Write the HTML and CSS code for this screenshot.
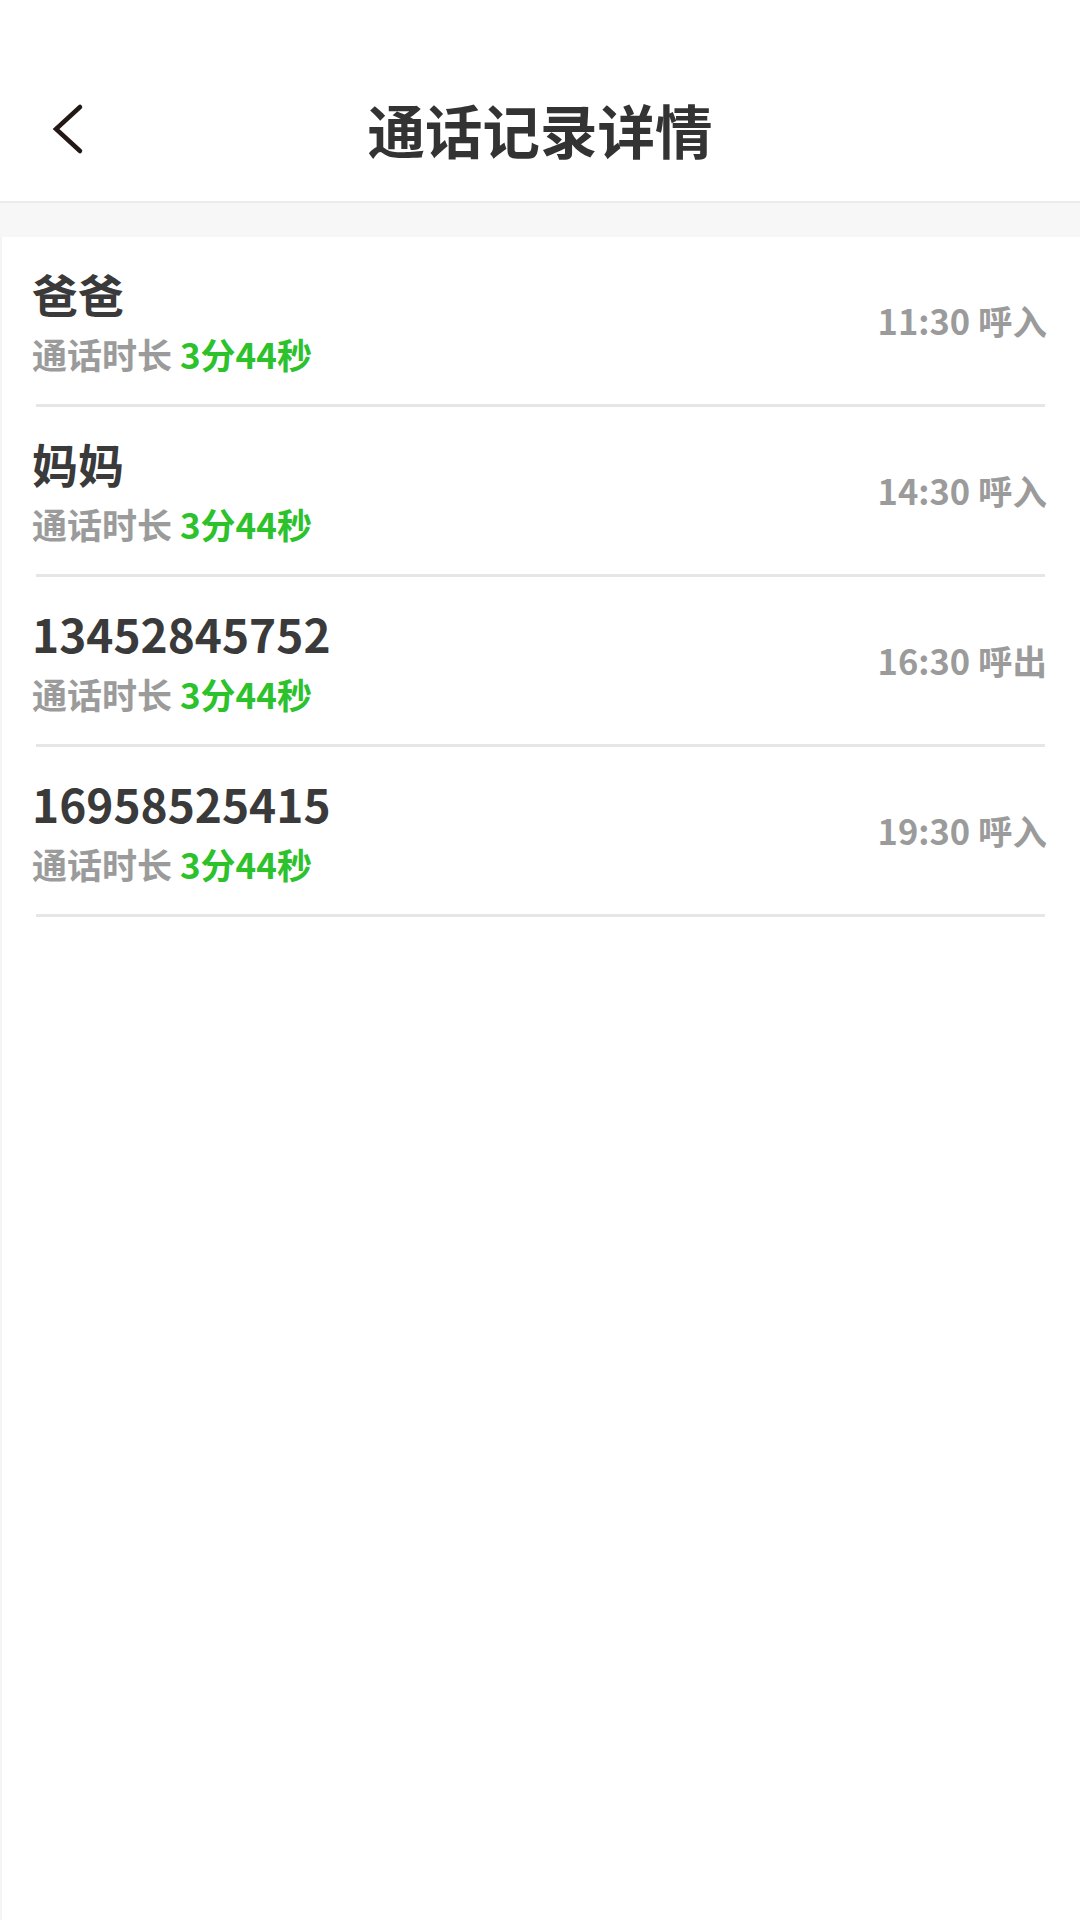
FILE: index.html
```html
<!DOCTYPE html>
<html lang="zh-CN">
<head>
<meta charset="utf-8">
<title>通话记录详情</title>
<link rel="stylesheet" href="styles.css">
</head>
<body>
<div class="page">
  <header class="header">
    <div class="nav">
      <button class="back" aria-label="返回">
        <svg width="40" height="56" viewBox="0 0 40 56"><path d="M28 5 L4 27 L28 49" fill="none" stroke="#231815" stroke-width="4.5" stroke-linecap="round" stroke-linejoin="miter"/></svg>
      </button>
      <h1 class="title">通话记录详情</h1>
    </div>
  </header>
  <div class="band"></div>
  <main class="list">
    <div class="row">
      <div class="info">
        <div class="name">爸爸</div>
        <div class="meta">通话时长 <span class="dur">3分44秒</span></div>
      </div>
      <div class="time">11:30 呼入</div>
    </div>
    <div class="divider"></div>
    <div class="row">
      <div class="info">
        <div class="name">妈妈</div>
        <div class="meta">通话时长 <span class="dur">3分44秒</span></div>
      </div>
      <div class="time">14:30 呼入</div>
    </div>
    <div class="divider"></div>
    <div class="row">
      <div class="info">
        <div class="name">13452845752</div>
        <div class="meta">通话时长 <span class="dur">3分44秒</span></div>
      </div>
      <div class="time">16:30 呼出</div>
    </div>
    <div class="divider"></div>
    <div class="row">
      <div class="info">
        <div class="name">16958525415</div>
        <div class="meta">通话时长 <span class="dur">3分44秒</span></div>
      </div>
      <div class="time">19:30 呼入</div>
    </div>
    <div class="divider"></div>
  </main>
</div>
</body>
</html>
```
FILE: styles.css
```css
* { box-sizing: border-box; }
html, body {
  margin: 0;
  padding: 0;
  background: #ffffff;
}
body {
  font-family: "Noto Sans CJK SC", "Noto Sans", sans-serif;
  width: 1080px;
  height: 1920px;
  overflow: hidden;
}
.page {
  display: flex;
  flex-direction: column;
  height: 1920px;
}
.header {
  padding-top: 57px;
  background: #ffffff;
  border-bottom: 2px solid #ebebeb;
}
.nav {
  height: 144px;
  display: flex;
  align-items: center;
  justify-content: center;
  position: relative;
}
.back {
  position: absolute;
  left: 52px;
  top: 45px;
  width: 40px;
  height: 56px;
  padding: 0;
  border: 0;
  background: transparent;
  display: flex;
}
.title {
  margin: 0;
  font-size: 57.5px;
  line-height: 58px;
  font-weight: 700;
  color: #333333;
}
.band {
  height: 34px;
  background: #f7f7f7;
}
.list {
  flex: 1;
  background: #ffffff;
  border-left: 2px solid #f4f4f4;
}
.row {
  height: 167px;
  display: flex;
  align-items: center;
  justify-content: space-between;
  padding: 0 33px 0 30px;
}
.info {
  display: flex;
  flex-direction: column;
  gap: 20px;
}
.name {
  font-size: 46px;
  line-height: 46px;
  font-weight: 700;
  color: #3a3a3a;
}
.meta {
  font-size: 35px;
  line-height: 35px;
  font-weight: 700;
  color: #9b9b9b;
}
.dur {
  color: #2bc22b;
}
.time {
  font-size: 34.5px;
  line-height: 35px;
  font-weight: 700;
  color: #9b9b9b;
}
.divider {
  height: 3px;
  background: #e6e6e6;
  margin: 0 35px 0 34px;
}
```
